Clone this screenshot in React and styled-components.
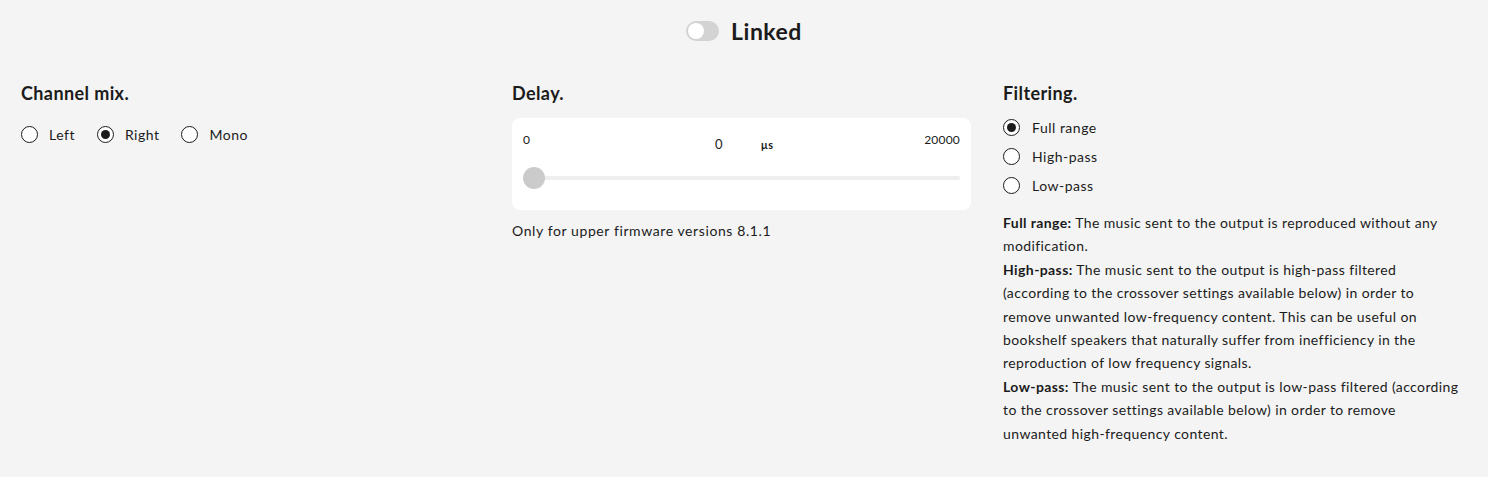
import React, { useState } from 'react';
import styled, { createGlobalStyle } from 'styled-components';

const GlobalStyle = createGlobalStyle`
  body {
    margin: 0;
    background: #f4f4f4;
    font-family: Lato, "Open Sans", sans-serif;
    color: #1b1b1b;
    letter-spacing: 0.5px;
  }
`;

const Page = styled.div`
  min-height: 100vh;
  background: #f4f4f4;
`;

const TopBar = styled.div`
  display: flex;
  justify-content: center;
  align-items: center;
  gap: 12px;
  padding-top: 17px;
  height: 28px;
`;

const Track = styled.button`
  position: relative;
  width: 33px;
  height: 20px;
  padding: 0;
  border: none;
  border-radius: 10px;
  background: ${p => (p.on ? '#1b1b1b' : '#d3d3d3')};
  cursor: pointer;
`;

const Knob = styled.span`
  position: absolute;
  top: 2px;
  left: ${p => (p.on ? '15px' : '2px')};
  width: 16px;
  height: 16px;
  border-radius: 50%;
  background: #fff;
`;

const Title = styled.div`
  font-size: 23px;
  font-weight: 700;
  letter-spacing: 0.5px;
`;

const Columns = styled.div`
  display: grid;
  grid-template-columns: repeat(3, 459px);
  column-gap: 32px;
  padding: 36px 20px 0 21px;
`;

const Column = styled.section`
  display: flex;
  flex-direction: column;
`;

const Heading = styled.h2`
  margin: 0 0 ${p => p.gap || 13}px;
  font-size: 18px;
  font-weight: 700;
  line-height: 24px;
  letter-spacing: 0.4px;
`;

const RadioRow = styled.div`
  display: flex;
  align-items: center;
  gap: 22px;
  padding-top: 4px;
`;

const RadioList = styled.div`
  display: flex;
  flex-direction: column;
  padding-top: 2px;
`;

const RadioLabel = styled.label`
  display: flex;
  align-items: center;
  gap: ${p => p.gap || 11}px;
  height: ${p => p.h || 24}px;
  font-size: 14px;
  cursor: pointer;
`;

const Circle = styled.span`
  box-sizing: border-box;
  display: flex;
  align-items: center;
  justify-content: center;
  width: 17px;
  height: 17px;
  border: 1.5px solid #1b1b1b;
  border-radius: 50%;
  background: #fff;

  &::after {
    content: '';
    width: 9px;
    height: 9px;
    border-radius: 50%;
    background: #1b1b1b;
    display: ${p => (p.checked ? 'block' : 'none')};
  }
`;

const Card = styled.div`
  background: #fff;
  border-radius: 8px;
  padding: 14px 11px 21px;
`;

const Scale = styled.div`
  display: grid;
  grid-template-columns: 1fr auto 1fr;
  font-size: 12px;
  letter-spacing: 0.2px;
  height: 30px;
`;

const Edge = styled.span`
  text-align: ${p => p.right ? 'right' : 'left'};
`;

const Current = styled.div`
  display: flex;
  align-items: center;
  padding-top: 4px;
  align-self: start;
  margin-left: -6px;
`;

const Value = styled.span`
  width: 30px;
  text-align: center;
  font-size: 13px;
`;

const Unit = styled.span`
  margin-left: 27px;
  font-size: 11px;
  font-weight: 700;
`;

const Slider = styled.div`
  position: relative;
  height: 22px;
  margin-top: 5px;
  display: flex;
  align-items: center;
`;

const Rail = styled.div`
  width: 100%;
  height: 4px;
  border-radius: 2px;
  background: #eeeeee;
`;

const Thumb = styled.span`
  position: absolute;
  top: 0;
  width: 22px;
  height: 22px;
  border-radius: 50%;
  background: #cbcbcb;
`;

const Note = styled.p`
  margin: 12px 0 0;
  font-size: 14px;
  letter-spacing: 0.6px;
`;

const Description = styled.p`
  margin: 11px 0 0;
  font-size: 14px;
  line-height: 23.4px;
  letter-spacing: 0.4px;
`;

const Radio = ({ label, checked, onSelect, gap, h }) => (
  <RadioLabel gap={gap} h={h} onClick={onSelect}>
    <Circle checked={checked} />
    {label}
  </RadioLabel>
);

export default function App() {
  const [linked, setLinked] = useState(false);
  const [mix, setMix] = useState('Right');
  const [filter, setFilter] = useState('Full range');
  const delay = 0;
  const max = 20000;

  return (
    <Page>
      <GlobalStyle />
      <TopBar>
        <Track on={linked} onClick={() => setLinked(!linked)}>
          <Knob on={linked} />
        </Track>
        <Title>Linked</Title>
      </TopBar>

      <Columns>
        <Column>
          <Heading>Channel mix.</Heading>
          <RadioRow>
            {['Left', 'Right', 'Mono'].map(m => (
              <Radio key={m} label={m} checked={mix === m} onSelect={() => setMix(m)} />
            ))}
          </RadioRow>
        </Column>

        <Column>
          <Heading>Delay.</Heading>
          <Card>
            <Scale>
              <Edge>0</Edge>
              <Current>
                <Value>{delay}</Value>
                <Unit>µs</Unit>
              </Current>
              <Edge right>{max}</Edge>
            </Scale>
            <Slider>
              <Rail />
              <Thumb style={{ left: `calc(${(delay / max) * 100}% - ${(delay / max) * 22}px)` }} />
            </Slider>
          </Card>
          <Note>Only for upper firmware versions 8.1.1</Note>
        </Column>

        <Column>
          <Heading gap={6}>Filtering.</Heading>
          <RadioList>
            {['Full range', 'High-pass', 'Low-pass'].map(f => (
              <Radio key={f} label={f} gap={12} h={29} checked={filter === f} onSelect={() => setFilter(f)} />
            ))}
          </RadioList>
          <Description>
            <b>Full range:</b> The music sent to the output is reproduced without any modification.
            <br />
            <b>High-pass:</b> The music sent to the output is high-pass filtered (according to the crossover settings available below) in order to remove unwanted low-frequency content. This can be useful on bookshelf speakers that naturally suffer from inefficiency in the reproduction of low frequency signals.
            <br />
            <b>Low-pass:</b> The music sent to the output is low-pass filtered (according to the crossover settings available below) in order to remove unwanted high-frequency content.
          </Description>
        </Column>
      </Columns>
    </Page>
  );
}
